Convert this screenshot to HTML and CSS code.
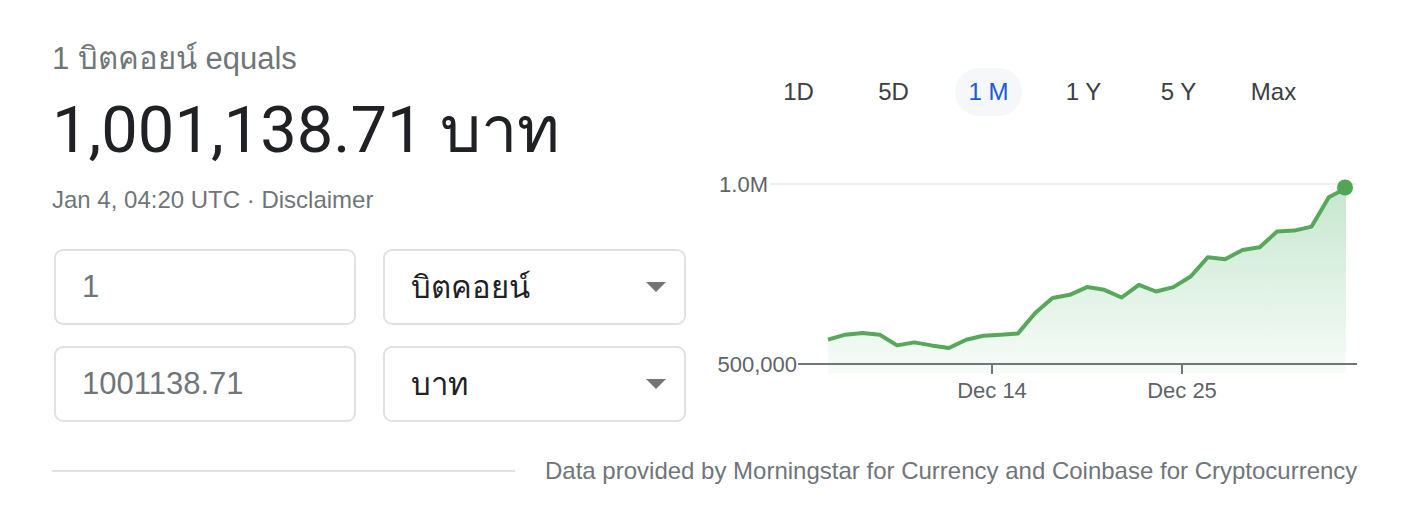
FILE: index.html
```html
<!DOCTYPE html>
<html lang="en">
<head>
    <meta charset="UTF-8">
    <title>Currency converter</title>
    <link rel="stylesheet" href="styles.css">
</head>
<body>
    <div class="card">
        <div class="top">
            <div class="left">
                <div class="equals">1 บิตคอยน์ equals</div>
                <div class="result">1,001,138.71 บาท</div>
                <div class="meta">Jan 4, 04:20 UTC · Disclaimer</div>

                <div class="converter">
                    <div class="field">1</div>
                    <div class="select">
                        <span>บิตคอยน์</span>
                        <span class="arrow"></span>
                    </div>
                    <div class="field">1001138.71</div>
                    <div class="select">
                        <span>บาท</span>
                        <span class="arrow"></span>
                    </div>
                </div>
            </div>

            <div class="right">
                <div class="tabs">
                    <span class="tab">1D</span>
                    <span class="tab">5D</span>
                    <span class="tab active">1 M</span>
                    <span class="tab">1 Y</span>
                    <span class="tab">5 Y</span>
                    <span class="tab">Max</span>
                </div>

                <svg class="chart" width="660" height="260" viewBox="0 0 660 260">
                    <defs>
                        <linearGradient id="area" x1="0" y1="0" x2="0" y2="1">
                            <stop offset="0" stop-color="#34a853" stop-opacity="0.28"/>
                            <stop offset="1" stop-color="#34a853" stop-opacity="0.04"/>
                        </linearGradient>
                    </defs>
                    <!-- grid -->
                    <line x1="70" y1="34" x2="656" y2="34" stroke="#eeeeee" stroke-width="2"/>
                    <text class="axis-label" x="68" y="42" text-anchor="end">1.0M</text>

                    <!-- area + line -->
                    <polygon fill="url(#area)" points="128,189.7 145.3,184.7 162.5,183 179.8,184.7 197.1,195.4 214.3,192.4 231.6,195.4 248.9,198 266.2,189.7 283.4,185.7 300.7,184.7 318,183.4 335.2,163 352.5,148 369.8,144.8 387,137.1 404.3,139.8 421.6,147.5 438.9,134.8 456.1,141.5 473.4,137.1 490.7,126.5 507.9,107.2 525.2,109.2 542.5,99.9 559.7,97.2 577,81.6 594.3,80.6 611.6,76.6 628.8,47.3 646,38.3 646,223 128,223"/>
                    <polyline fill="none" stroke="#57a85b" stroke-width="4" stroke-linejoin="round" points="128,189.7 145.3,184.7 162.5,183 179.8,184.7 197.1,195.4 214.3,192.4 231.6,195.4 248.9,198 266.2,189.7 283.4,185.7 300.7,184.7 318,183.4 335.2,163 352.5,148 369.8,144.8 387,137.1 404.3,139.8 421.6,147.5 438.9,134.8 456.1,141.5 473.4,137.1 490.7,126.5 507.9,107.2 525.2,109.2 542.5,99.9 559.7,97.2 577,81.6 594.3,80.6 611.6,76.6 628.8,47.3 646,38.3"/>
                    <circle cx="645" cy="37.5" r="8" fill="#52a555"/>

                    <!-- x axis -->
                    <line x1="98" y1="214" x2="657" y2="214" stroke="#70757a" stroke-width="2"/>
                    <text class="axis-label" x="97" y="222" text-anchor="end">500,000</text>
                    <line x1="292" y1="214" x2="292" y2="224" stroke="#70757a" stroke-width="2"/>
                    <line x1="482" y1="214" x2="482" y2="224" stroke="#70757a" stroke-width="2"/>
                    <text class="axis-label" x="292" y="248" text-anchor="middle">Dec 14</text>
                    <text class="axis-label" x="482" y="248" text-anchor="middle">Dec 25</text>
                </svg>
            </div>
        </div>

        <div class="footer">
            <div class="rule"></div>
            <div class="source">Data provided by Morningstar for Currency and Coinbase for Cryptocurrency</div>
        </div>
    </div>
</body>
</html>
```

FILE: styles.css
```css
body {
    margin: 0;
    font-family: "Liberation Sans", Arial, sans-serif;
    color: #202124;
    background: #fff;
}
.card {
    width: 1306px;
    padding: 41px 0 0 52px;
}
.top {
    display: flex;
}
.left {
    width: 634px;
}
.equals {
    font-size: 31px;
    line-height: 36px;
    color: #70757a;
}
.result {
    font-family: Roboto, "Liberation Sans", sans-serif;
    font-size: 65px;
    line-height: 88px;
    margin-top: 9px;
    color: #202124;
}
.meta {
    font-size: 24px;
    line-height: 32px;
    margin-top: 10px;
    color: #70757a;
}
.converter {
    display: grid;
    grid-template-columns: 302px 303px;
    column-gap: 27px;
    row-gap: 21px;
    margin: 33px 0 0 2px;
}
.field, .select {
    height: 76px;
    box-sizing: border-box;
    border: 2px solid #dfe1e5;
    border-radius: 9px;
    display: flex;
    align-items: center;
    font-size: 31px;
}
.field {
    padding-left: 26px;
    color: #70757a;
}
.select {
    padding: 0 18px 0 26px;
    justify-content: space-between;
    color: #202124;
}
.arrow {
    width: 0;
    height: 0;
    border-left: 10px solid transparent;
    border-right: 10px solid transparent;
    border-top: 10px solid #70757a;
}
.right {
    width: 660px;
    margin-left: 14px;
}
.tabs {
    display: flex;
    gap: 28px;
    margin: 27px 0 0 65px;
}
.tab {
    width: 67px;
    height: 48px;
    border-radius: 24px;
    display: flex;
    align-items: center;
    justify-content: center;
    font-size: 24px;
    color: #3c4043;
}
.tab.active {
    background: #f5f7fa;
    color: #1a5bd6;
}
.chart {
    display: block;
    margin-top: 34px;
}
.axis-label {
    font-family: "Liberation Sans", Arial, sans-serif;
    font-size: 22px;
    fill: #5f6368;
}
.footer {
    display: flex;
    align-items: center;
    gap: 30px;
    margin-top: 33px;
}
.rule {
    width: 463px;
    height: 2px;
    background: #dfe1e5;
}
.source {
    font-size: 24px;
    line-height: 32px;
    color: #70757a;
}
```
